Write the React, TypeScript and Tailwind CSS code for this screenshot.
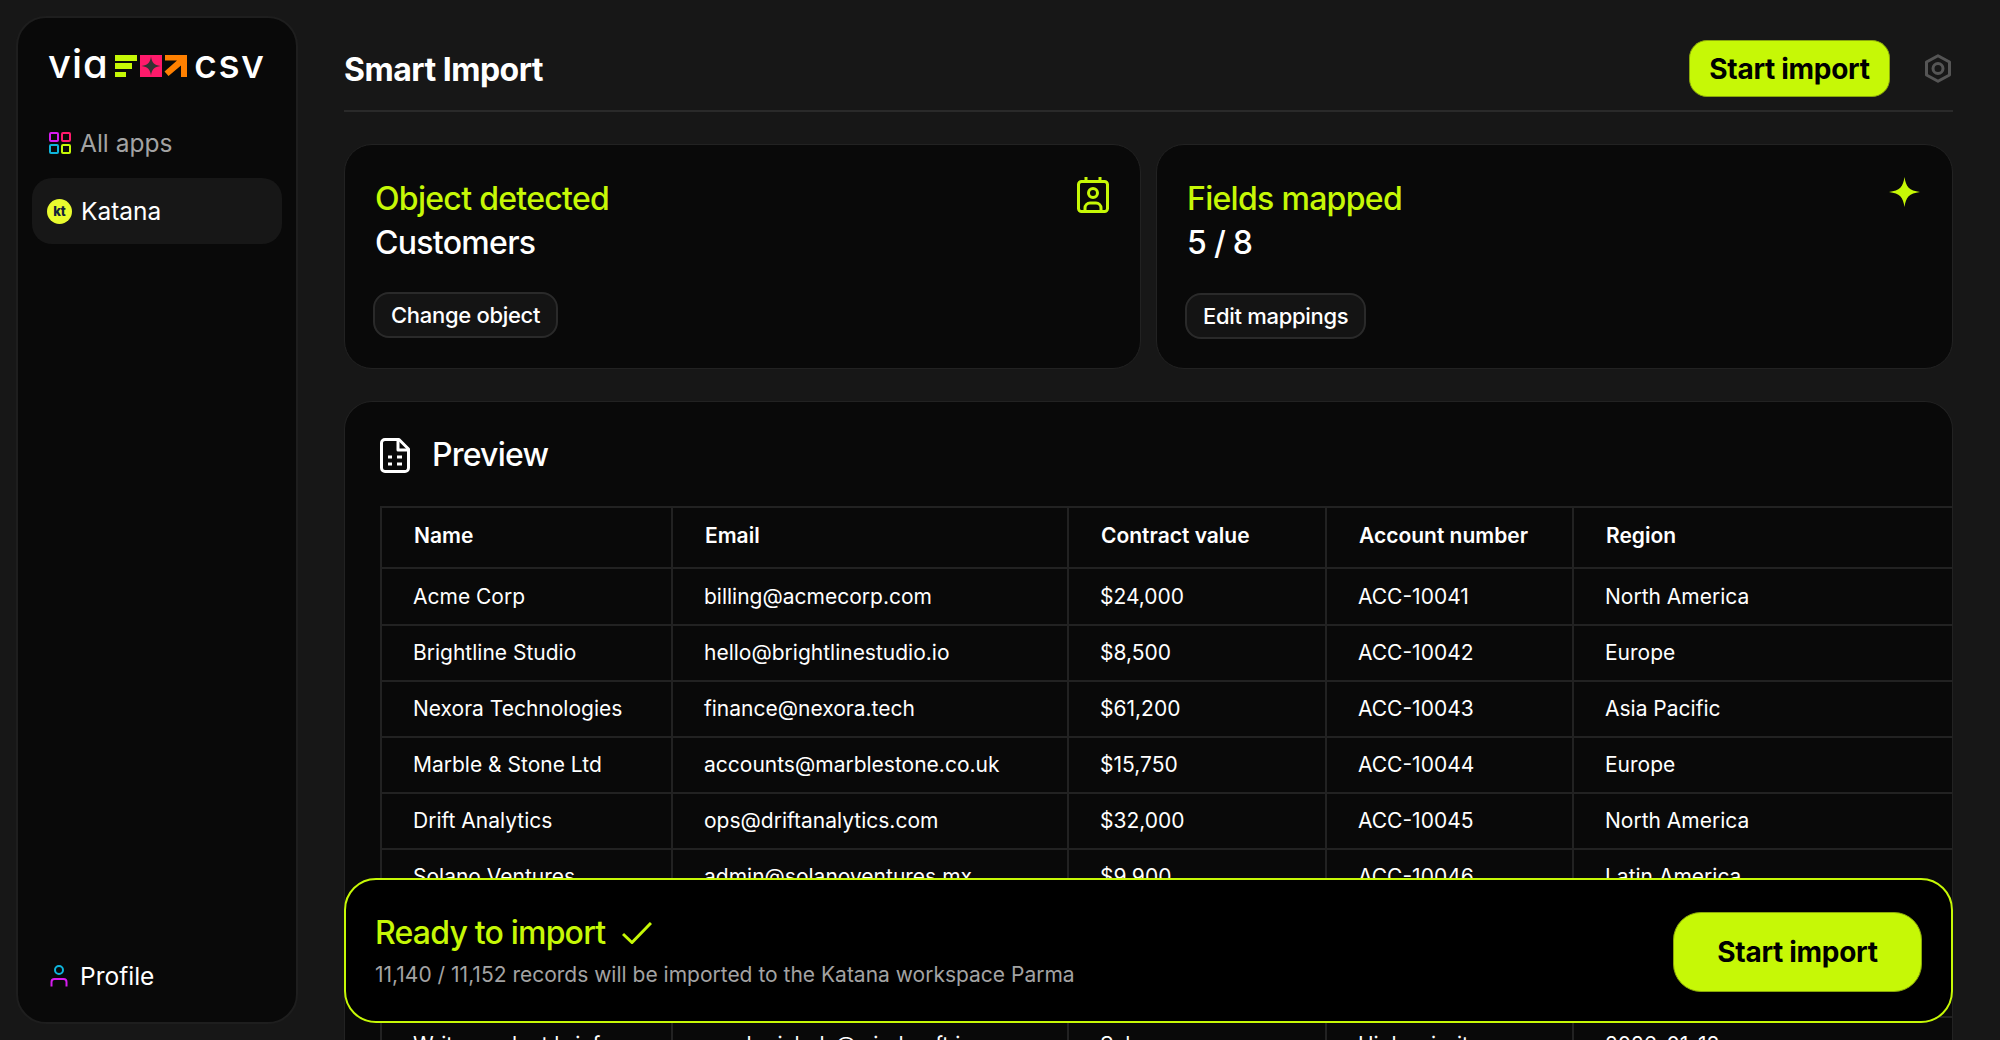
import React from "react";

const rows = [
  ["Acme Corp", "billing@acmecorp.com", "$24,000", "ACC-10041", "North America"],
  ["Brightline Studio", "hello@brightlinestudio.io", "$8,500", "ACC-10042", "Europe"],
  ["Nexora Technologies", "finance@nexora.tech", "$61,200", "ACC-10043", "Asia Pacific"],
  ["Marble & Stone Ltd", "accounts@marblestone.co.uk", "$15,750", "ACC-10044", "Europe"],
  ["Drift Analytics", "ops@driftanalytics.com", "$32,000", "ACC-10045", "North America"],
  ["Solano Ventures", "admin@solanoventures.mx", "$9,900", "ACC-10046", "Latin America"],
  ["Harbor Freight Co", "contact@harborfreight.com", "$41,300", "ACC-10047", "North America"],
  ["Lumen Health", "team@lumenhealth.io", "$18,600", "ACC-10048", "Europe"],
  ["Write product brief", "sarah.nichols@windcraft.io", "Sales", "High priority", "2026-01-18"],
];

function Logo() {
  return (
    <div className="flex items-center h-[44px] pl-[30px] text-white">
      <span className="text-[40px] leading-[44px] font-medium tracking-[1px] w-[67px] [font-feature-settings:'cv11']">via</span>
      <svg width="72" height="22" viewBox="0 0 72 22" className="shrink-0 mt-[4px]">
        <rect x="0" y="0" width="22" height="6" fill="#c6f806" />
        <rect x="0" y="8" width="17" height="6" fill="#c6f806" />
        <rect x="0" y="17" width="11" height="5" fill="#c6f806" />
        <rect x="25" y="0" width="22" height="22" fill="#ff1a6b" />
        <path d="M36 1.500C37 8 39 10 45.500 11 39 12 37 14 36 20.500 35 14 33 12 26.500 11 33 10 35 8 36 1.500Z" fill="#333" />
        <path d="M50 0H72V22H66V10.500L53.500 21 49.500 16.500 62 5.500H50Z" fill="#ff8000" />
      </svg>
      <span className="ml-[7px] text-[40px] leading-[44px] font-medium tracking-[1.2px]">csv</span>
    </div>
  );
}

function AppsIcon() {
  return (
    <svg width="22" height="22" viewBox="0 0 22 22" fill="none" strokeWidth="2">
      <rect x="1" y="1" width="8" height="8" rx="1" stroke="#d61cf0" />
      <rect x="13" y="1" width="8" height="8" rx="1" stroke="#ff1a6b" />
      <rect x="1" y="13" width="8" height="8" rx="1" stroke="#0fb5dc" />
      <rect x="13" y="13" width="8" height="8" rx="1" stroke="#c6f806" />
    </svg>
  );
}

function ProfileIcon() {
  return (
    <svg width="18" height="22" viewBox="0 0 18 22" fill="none" strokeWidth="2">
      <circle cx="9" cy="5" r="4" stroke="#0fb5dc" />
      <path d="M1.500 21.500V17a3 3 0 0 1 3-3h9a3 3 0 0 1 3 3v4.500" stroke="#d61cf0" />
    </svg>
  );
}

function ContactIcon() {
  return (
    <svg width="32" height="36" viewBox="0 0 32 36" fill="none" stroke="#c6f806" strokeWidth="3" className="-mr-[1px]">
      <path d="M9 0v5M23 0v5" />
      <rect x="1.500" y="4.500" width="29" height="30" rx="3" />
      <circle cx="16" cy="16" r="4.500" />
      <path d="M8 34v-3a5 5 0 0 1 5-5h6a5 5 0 0 1 5 5v3" />
    </svg>
  );
}

function Sparkle() {
  return (
    <svg width="31" height="30" viewBox="0 0 31 30" fill="#c6f806">
      <path d="M15.500 0C17 10 20 13.500 31 15 20 16.500 17 20 15.500 30 14 20 11 16.500 0 15 11 13.500 14 10 15.500 0Z" />
    </svg>
  );
}

function Gear() {
  return (
    <svg width="26" height="29" viewBox="0 0 26 29" fill="none" stroke="#555" strokeWidth="3">
      <path d="M13 1.700L24.500 8V21L13 27.300 1.500 21V8Z" strokeLinejoin="round" />
      <circle cx="13" cy="14.500" r="5" />
    </svg>
  );
}

function DocIcon() {
  return (
    <svg width="30" height="35" viewBox="0 0 30 35" fill="none" stroke="#fff" strokeWidth="3" strokeLinejoin="round">
      <path d="M19 1.500H5a3.500 3.500 0 0 0-3.500 3.500V30A3.500 3.500 0 0 0 5 33.500h20a3.500 3.500 0 0 0 3.500-3.500V11Z" />
      <path d="M18 1.500V12h10.500" />
      <path d="M8 19h4M17 19h5M8 26h4M17 26h5" />
    </svg>
  );
}

function Check() {
  return (
    <svg width="30" height="22" viewBox="0 0 30 22" fill="none" stroke="#c6f806" strokeWidth="3">
      <path d="M1 12L10 20.500 29 1" />
    </svg>
  );
}

function Card({ title, value, action, icon, mt }: { title: string; value: string; action: string; icon: React.ReactNode; mt: string }) {
  return (
    <div className="h-[225px] rounded-[28px] border border-[#222] bg-[#090909] pl-[30px] pr-[32px] pt-[32px] flex justify-between">
      <div className="flex flex-col items-start">
        <div className="text-[32px] leading-[44px] font-medium text-[#c6f806] tracking-[-0.7px]">{title}</div>
        <div className="text-[32px] leading-[44px] font-medium text-white tracking-[-0.7px]">{value}</div>
        <button className={`${mt} -ml-[2px] h-[46px] px-[16px] rounded-[16px] border-2 border-[#2a2a2a] bg-[#141414] text-white text-[22px] font-medium tracking-[-0.3px]`}>{action}</button>
      </div>
      {icon}
    </div>
  );
}

export default function App() {
  return (
    <div className="flex h-[1040px] w-[2000px] overflow-hidden bg-[#171717] text-white [font-family:Inter,sans-serif]">
      <aside className="ml-[16px] my-[16px] w-[282px] shrink-0 rounded-[30px] border-2 border-[#1e1e1e] bg-[#090909] flex flex-col pt-[24px] px-[14px] pb-[26px]">
        <div className="-mx-[14px]"><Logo /></div>
        <div className="mt-[37px] flex items-center gap-[9px] h-[40px] pl-[17px] text-[#a3a3a3] text-[24.5px]">
          <AppsIcon />
          <span>All apps</span>
        </div>
        <div className="mt-[15px] flex items-center gap-[9px] h-[66px] pl-[15px] rounded-[20px] bg-[#171717] text-[24.5px]">
          <span className="w-[25px] h-[25px] rounded-full bg-[#e9fb2f] text-[#12233a] text-[13px] font-extrabold flex items-center justify-center leading-none">kt</span>
          <span>Katana</span>
        </div>
        <div className="mt-auto flex items-center gap-[12px] h-[40px] pl-[18px] text-[24.5px]">
          <ProfileIcon />
          <span>Profile</span>
        </div>
      </aside>

      <main className="relative flex-1 min-w-0 pl-[46px] pr-[47px] flex flex-col">
        <header className="h-[112px] shrink-0 border-b-2 border-[#2a2a2a] flex items-center justify-between pt-[40px] pb-[13px]">
          <h1 className="text-[32px] font-bold tracking-[-0.5px] mt-[2px]">Smart Import</h1>
          <div className="flex items-center gap-[35px] pr-[2px]">
            <button className="w-[201px] h-[57px] rounded-[18px] bg-[#c6f806] border border-[#8aa80a] text-black text-[28px] font-bold tracking-[-0.3px]">Start import</button>
            <Gear />
          </div>
        </header>

        <section className="mt-[32px] grid grid-cols-2 gap-[15px] shrink-0">
          <Card title="Object detected" value="Customers" action="Change object" mt="mt-[27px]" icon={<ContactIcon />} />
          <Card title="Fields mapped" value="5 / 8" action="Edit mappings" mt="mt-[28px]" icon={<Sparkle />} />
        </section>

        <section className="mt-[32px] flex-1 min-h-0 rounded-t-[28px] border border-[#222] border-b-0 bg-[#090909] pl-[35px] pt-[35px] overflow-hidden">
          <div className="flex items-center gap-[22px] h-[36px]">
            <DocIcon />
            <h2 className="text-[32px] font-medium tracking-[-0.8px]">Preview</h2>
          </div>
          <table className="mt-[33px] table-fixed border-collapse w-[1574px] text-[21px]">
            <colgroup>
              <col className="w-[291px]" />
              <col className="w-[396px]" />
              <col className="w-[258px]" />
              <col className="w-[247px]" />
              <col className="w-[382px]" />
            </colgroup>
            <thead>
              <tr className="h-[61px]">
                {["Name", "Email", "Contract value", "Account number", "Region"].map((h, i) => (
                  <th key={h} className={`border-2 border-[#222] ${i === 4 ? "border-r-0" : ""} pl-[32px] pb-[4px] text-left font-semibold`}>{h}</th>
                ))}
              </tr>
            </thead>
            <tbody>
              {rows.map((r, ri) => (
                <tr key={r[0]} className={ri === 0 ? "h-[57px]" : "h-[56px]"}>
                  {r.map((c, i) => (
                    <td key={i} className={`border-2 border-[#222] ${i === 4 ? "border-r-0" : ""} pl-[31px] whitespace-nowrap font-normal text-white`}>{c}</td>
                  ))}
                </tr>
              ))}
            </tbody>
          </table>
        </section>

        <div className="absolute left-[46px] right-[47px] bottom-[17px] h-[145px] rounded-[32px] border-2 border-[#c6f806] bg-black pl-[29px] pr-[29px] flex items-center justify-between">
          <div>
            <div className="flex items-center gap-[17px] text-[32px] leading-[44px] font-medium text-[#c6f806] tracking-[-0.8px]">
              <span>Ready to import</span>
              <Check />
            </div>
            <div className="mt-[4px] text-[21px] leading-[32px] text-[#a3a3a3]">11,140 / 11,152 records will be imported to the Katana workspace Parma</div>
          </div>
          <button className="mt-[2px] w-[249px] h-[80px] rounded-[28px] bg-[#c6f806] border border-[#8aa80a] text-black text-[28px] font-bold tracking-[-0.3px]">Start import</button>
        </div>
      </main>
    </div>
  );
}
